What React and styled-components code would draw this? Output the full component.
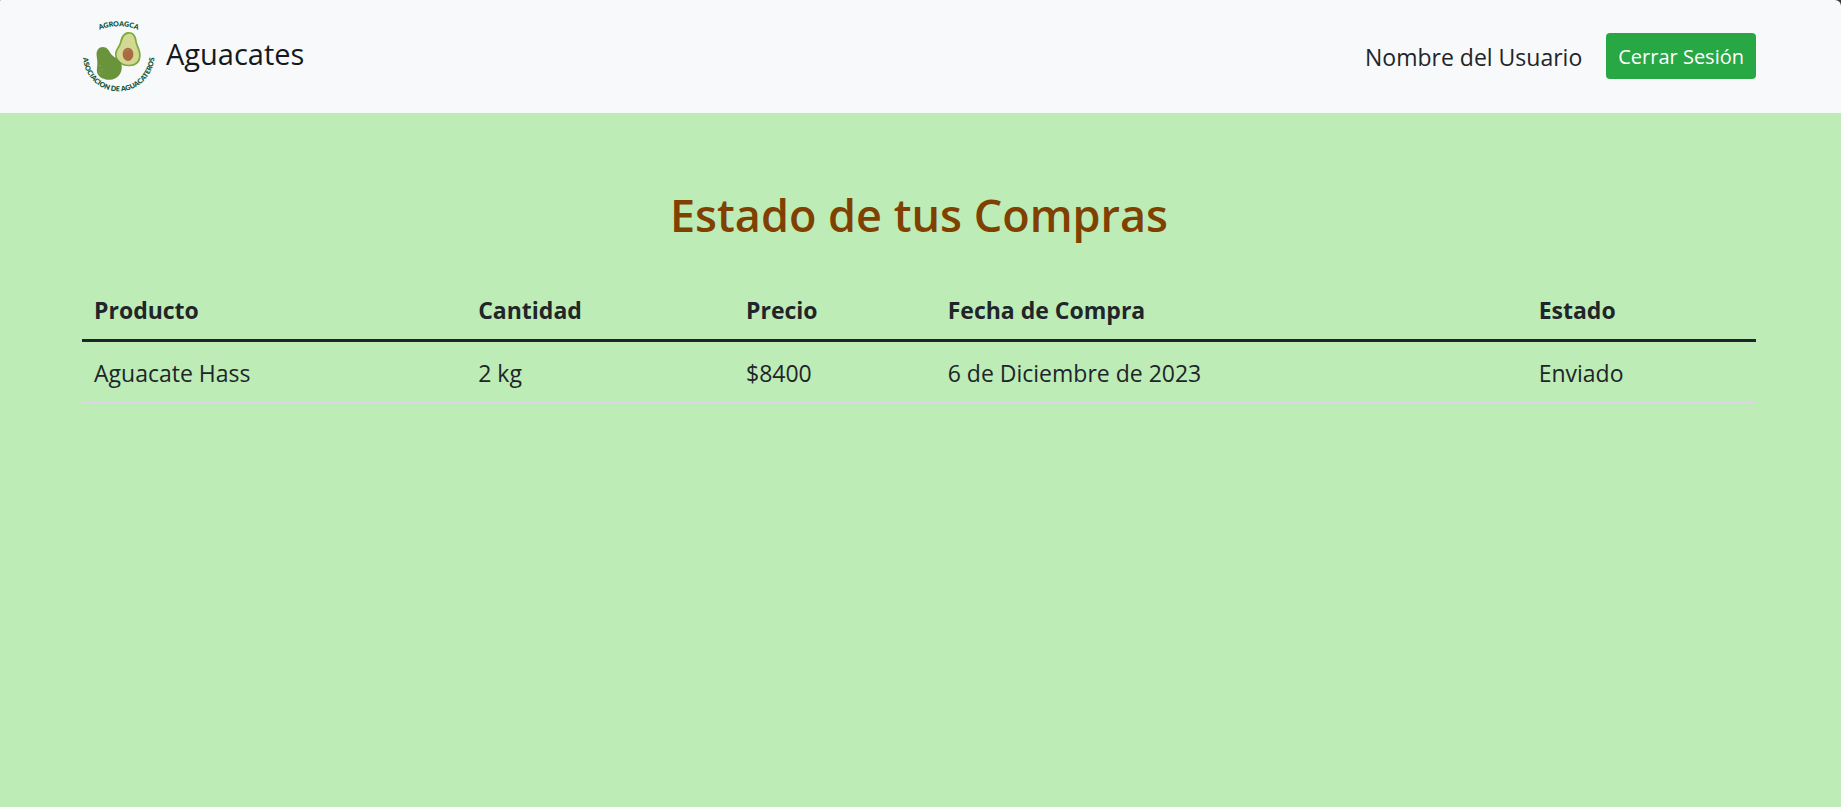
import React from "react";
import styled, { createGlobalStyle } from "styled-components";

const GlobalStyle = createGlobalStyle`
  *, *::before, *::after { box-sizing: border-box; }
  html, body { margin: 0; background: #bdecb6; }
  body {
    color: #212529;
    font-family: "Segoe UI", "Open Sans", "Noto Sans", sans-serif;
    font-size: 23px;
    line-height: 36px;
  }
`;

const HeaderFrame = styled.header`
  background: #3a3a3a;
`;

const Navbar = styled.nav`
  display: flex;
  align-items: center;
  justify-content: space-between;
  min-height: 113px;
  padding: 11px 85px 12px 82px;
  border-radius: 1px 6px 0 0;
  background: #f8f9fb;
`;

const Brand = styled.a`
  display: flex;
  align-items: center;
  gap: 9px;
  color: #16191c;
  font-size: 29px;
  text-decoration: none;
`;

const BrandName = styled.span`
  padding-bottom: 5px;
`;

const LogoSvg = styled.svg`
  display: block;
  width: 75px;
  height: 75px;
`;

const LogoText = styled.text`
  fill: #12583b;
  font-family: Lato, sans-serif;
  font-weight: 800;
  font-size: 21px;
`;

const Account = styled.div`
  display: flex;
  align-items: center;
  gap: 24px;
`;

const UserName = styled.span`
  padding-top: 2px;
`;

const LogoutButton = styled.button`
  height: 46px;
  padding: 1px 12px 0;
  border: 0;
  border-radius: 4px;
  background: #28a745;
  color: #fff;
  font: inherit;
  font-size: 20px;
  cursor: pointer;
`;

const Main = styled.main`
  padding: 73px 85px 72px 82px;
`;

const Title = styled.h1`
  margin: 0 0 35px;
  color: #804000;
  font-size: 45px;
  font-weight: 600;
  line-height: 58px;
  text-align: center;
`;

const Table = styled.table`
  width: 100%;
  border-collapse: separate;
  border-spacing: 0;
  table-layout: fixed;
`;

const Column = styled.col`
  width: ${(p) => p.$width};
`;

const HeadCell = styled.th`
  padding: 13px 12px 11px;
  border-bottom: 3px solid #212529;
  font-weight: 700;
  text-align: left;
`;

const Cell = styled.td`
  padding: 13px 12px 11px;
  border-bottom: 1px solid #dfd8e4;
`;

const columns = [
  { key: "producto", label: "Producto", width: "22.95%" },
  { key: "cantidad", label: "Cantidad", width: "16%" },
  { key: "precio", label: "Precio", width: "12.05%" },
  { key: "fecha", label: "Fecha de Compra", width: "35.3%" },
  { key: "estado", label: "Estado", width: "13.7%" },
];

const compras = [
  {
    id: 1,
    producto: "Aguacate Hass",
    cantidad: "2 kg",
    precio: "$8400",
    fecha: "6 de Diciembre de 2023",
    estado: "Enviado",
  },
];

function Logo() {
  return (
    <LogoSvg viewBox="6 12 225 225" role="img" aria-label="Agroagca">
      <defs>
        <path id="arc-top" d="M42 52 A158 158 0 0 1 190 52" />
        <path id="arc-bottom" d="M9 115 L9 122 A107 107 0 0 0 223 122 L223 115" />
      </defs>
      <LogoText textAnchor="middle">
        <textPath href="#arc-top" startOffset="50%">AGROAGCA</textPath>
      </LogoText>
      <LogoText textAnchor="middle">
        <textPath href="#arc-bottom" startOffset="50%">ASOCIACION DE AGUACATEROS</textPath>
      </LogoText>
      <path
        d="M140 52 C156 48 168 58 170 76 C171 92 184 104 182 124 C181 145 166 155 146 154 C124 154 106 140 105 120 C104 103 116 96 120 80 C123 67 128 56 140 52Z"
        fill="#79ad3b"
      />
      <path
        d="M143 57 C155 54 163 62 165 77 C167 93 178 106 177 122 C176 140 163 149 146 149 C127 149 111 137 110 120 C110 105 121 97 125 82 C129 68 133 60 143 57Z"
        fill="#d3d993"
      />
      <ellipse cx="144" cy="118" rx="16" ry="20" fill="#a86c40" />
      <path d="M134 108 C138 100 146 99 150 104 C144 104 138 108 136 118Z" fill="#b0764a" />
      <path
        d="M54 103 C62 92 79 94 86 106 C92 117 97 123 108 129 C124 138 129 154 123 170 C116 189 98 196 80 194 C60 191 48 178 51 160 C53 145 52 137 50 124 C49 115 50 108 54 103Z"
        fill="#6a943b"
      />
      <g fill="#8fb63d">
        <circle cx="60" cy="152" r="2" />
        <circle cx="65" cy="164" r="2" />
        <circle cx="60" cy="174" r="2" />
        <circle cx="58" cy="163" r="1" />
        <circle cx="68" cy="178" r="1" />
        <circle cx="114" cy="151" r="1" />
      </g>
    </LogoSvg>
  );
}

export default function App() {
  return (
    <>
      <GlobalStyle />
      <HeaderFrame>
        <Navbar>
          <Brand href="#">
            <Logo />
            <BrandName>Aguacates</BrandName>
          </Brand>
          <Account>
            <UserName>Nombre del Usuario</UserName>
            <LogoutButton type="button">Cerrar Sesión</LogoutButton>
          </Account>
        </Navbar>
      </HeaderFrame>
      <Main>
        <Title>Estado de tus Compras</Title>
        <Table>
          <colgroup>
            {columns.map((c) => (
              <Column key={c.key} $width={c.width} />
            ))}
          </colgroup>
          <thead>
            <tr>
              {columns.map((c) => (
                <HeadCell key={c.key} scope="col">{c.label}</HeadCell>
              ))}
            </tr>
          </thead>
          <tbody>
            {compras.map((compra) => (
              <tr key={compra.id}>
                {columns.map((c) => (
                  <Cell key={c.key}>{compra[c.key]}</Cell>
                ))}
              </tr>
            ))}
          </tbody>
        </Table>
      </Main>
    </>
  );
}
